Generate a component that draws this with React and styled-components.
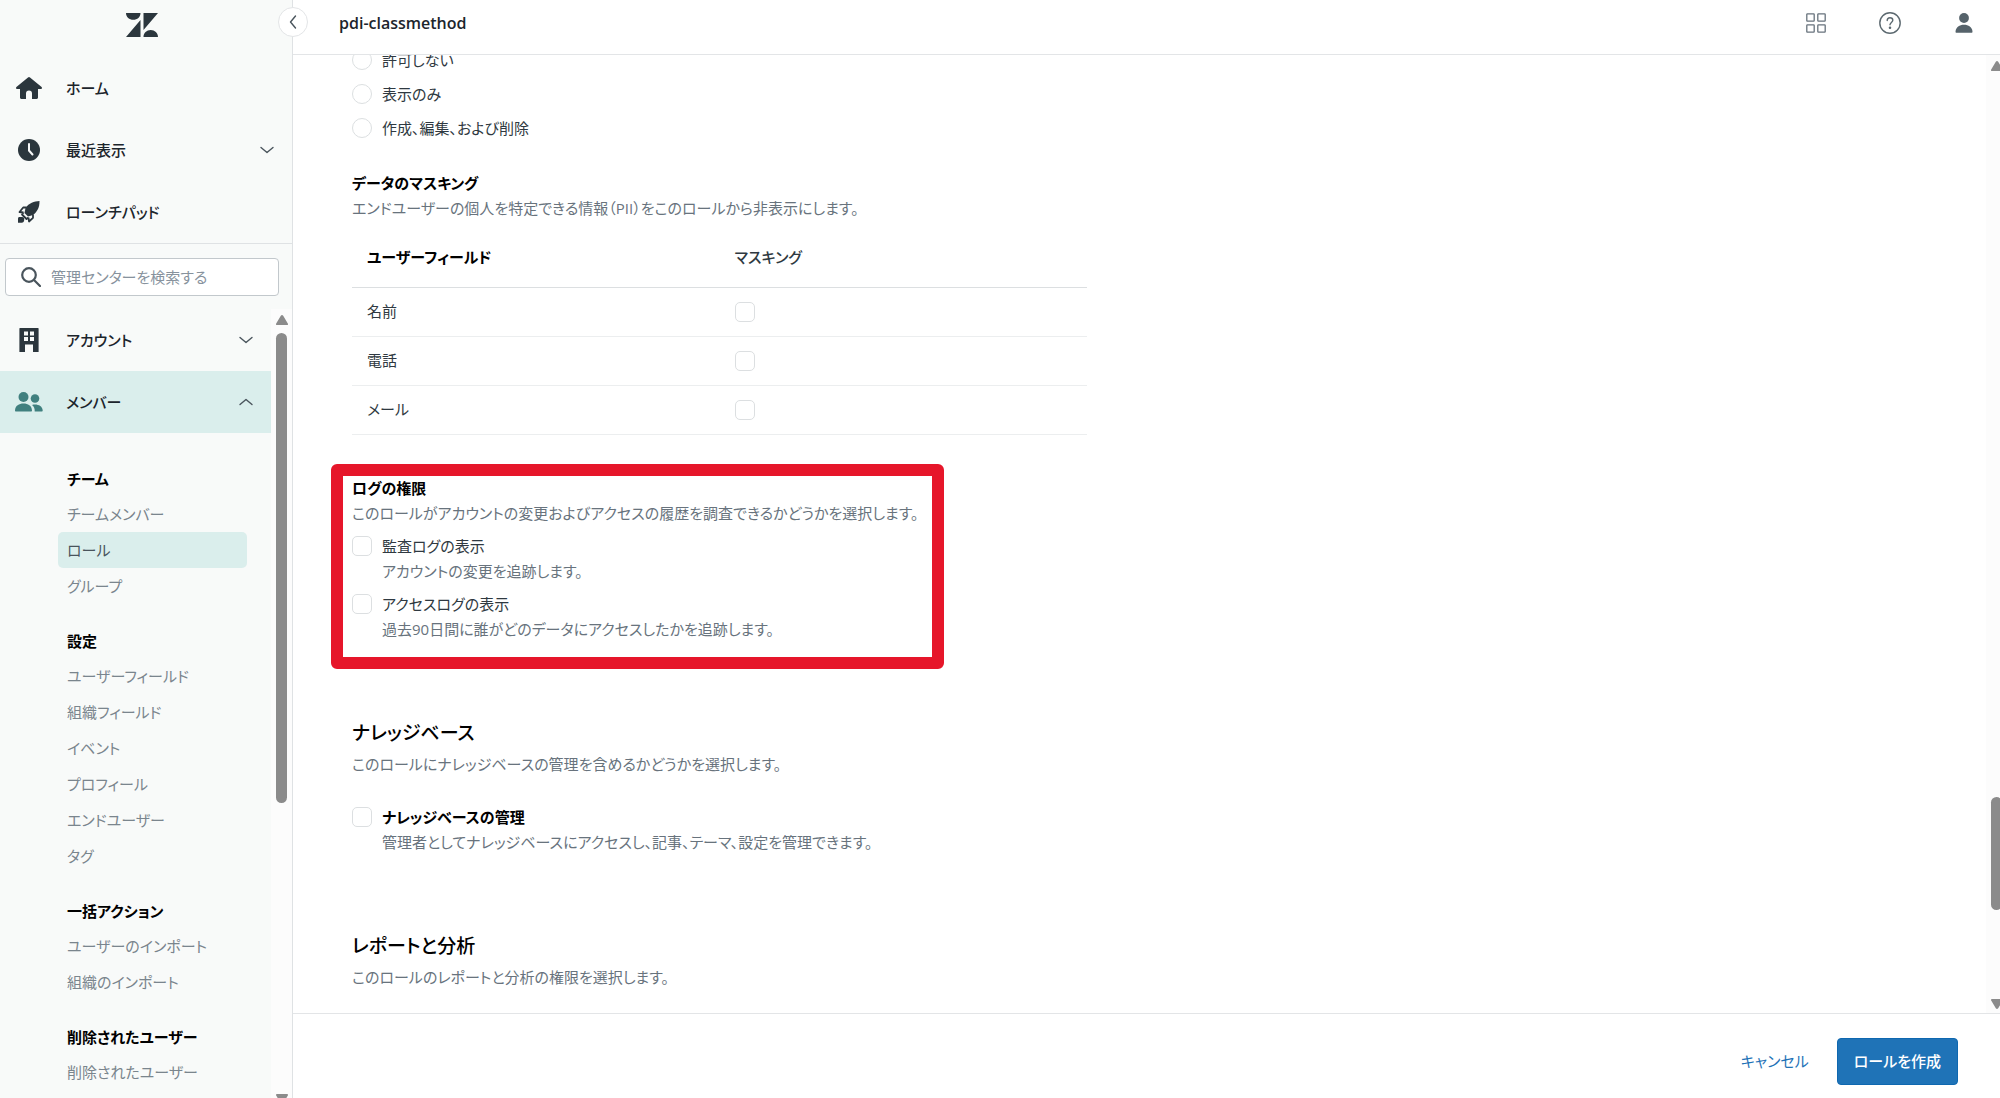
import styled, { createGlobalStyle } from 'styled-components';

const GlobalStyle = createGlobalStyle`
    * {
        box-sizing: border-box;
    }

    body {
        margin: 0;
        background: #fff;
        color: #2f3941;
        font-family: 'Open Sans', 'Noto Sans CJK JP', sans-serif;
        font-feature-settings: 'palt';
        font-size: 15px;
        line-height: 25px;
    }

    button, input {
        font: inherit;
        font-feature-settings: inherit;
        color: inherit;
    }
`;

const navGroups = [
    { title: 'チーム', links: ['チームメンバー', 'ロール', 'グループ'] },
    { title: '設定', links: ['ユーザーフィールド', '組織フィールド', 'イベント', 'プロフィール', 'エンドユーザー', 'タグ'] },
    { title: '一括アクション', links: ['ユーザーのインポート', '組織のインポート'] },
    { title: '削除されたユーザー', links: ['削除されたユーザー'] },
];

const accessOptions = ['許可しない', '表示のみ', '作成、編集、および削除'];

const maskFields = ['名前', '電話', 'メール'];

const logOptions = [
    { id: 'audit', label: '監査ログの表示', hint: 'アカウントの変更を追跡します。' },
    { id: 'access', label: 'アクセスログの表示', hint: '過去90日間に誰がどのデータにアクセスしたかを追跡します。' },
];

/* icons */

const Logo = () => (
    <svg width="32" height="24" viewBox="0 0 32 24" fill="#2b363d" aria-hidden="true">
        <path d="M0 0H14.5C14.5 4 11.3 6.8 7.3 6.8S0 4 0 0ZM14.5 7V24H0ZM17.5 0H32L17.5 17ZM17.5 24C17.5 20 20.7 17 24.7 17S32 20 32 24Z" />
    </svg>
);

const HomeIcon = () => (
    <svg width="26" height="22" viewBox="0 0 26 22" fill="currentColor" aria-hidden="true">
        <path d="M12 .4a1.6 1.6 0 0 1 2 0l11.3 9.4c1.2 1 .6 2.200-.6 2.200H22v8.600c0 .8-.5 1.400-1.300 1.400H16v-5.500a3 3 0 0 0-6 0V22H5.300C4.500 22 4 21.400 4 20.600V12H1.300C.1 12-.5 10.800.7 9.800Z" />
    </svg>
);

const ClockIcon = () => (
    <svg width="22" height="22" viewBox="0 0 22 22" aria-hidden="true">
        <circle cx="11" cy="11" r="11" fill="currentColor" />
        <path d="M11 5v6.500l3.500 4" fill="none" stroke="#f8f9f9" strokeWidth="2" strokeLinecap="round" />
    </svg>
);

const RocketIcon = () => (
    <svg width="24" height="24" viewBox="0 0 24 24" fill="currentColor" aria-hidden="true">
        <path d="M22.500 1C17 1.400 12 3 8.500 8L7.500 13 11 16.500 16 15C20.500 11.500 22.600 7 22.500 1Z" />
        <path d="M9.500 7.500H6.200L2.500 12l4 .5M16 14.500v3.300L12 21.500 11.500 17.500M6.500 12.500l-1.500 2 4.500 4.500 2-1.500" fill="none" stroke="currentColor" strokeWidth="1.800" strokeLinejoin="round" />
        <path d="M2 17h3.200c1.200 0 2 .8 2 2V20c0 1.500-1 2.800-2.500 2.800H1V19c0-1 .3-2 1-2Z" />
    </svg>
);

const BuildingIcon = () => (
    <svg width="20" height="24" viewBox="0 0 20 24" fill="currentColor" aria-hidden="true">
        <path fillRule="evenodd" d="M1 0H19a.6.6 0 0 1 .6.6V24H14V16.500H6V24H.4V.6A.6.6 0 0 1 1 0ZM5 3.500V7.500H9V3.500ZM11 3.500V7.500H15V3.500ZM5 9V13H9V9ZM11 9V13H15V9Z" />
    </svg>
);

const PeopleIcon = () => (
    <svg width="28" height="20" viewBox="0 0 28 20" fill="#40807f" aria-hidden="true">
        <circle cx="8.500" cy="5" r="5" />
        <circle cx="20" cy="6.500" r="4.300" />
        <path d="M0 18.500C.3 13.500 4 11.500 8.500 11.500S16.700 13.500 17 18.500c0 .6-.4 1-1 1H1c-.6 0-1-.4-1-1ZM17 13c1-.4 2-.5 3-.5 4 0 7.500 2 7.700 6 0 .6-.4 1-1 1h-7c.2-2.700-.7-5-2.700-6.500Z" />
    </svg>
);

const SearchIcon = () => (
    <svg width="20" height="20" viewBox="0 0 20 20" fill="none" stroke="#49545c" strokeWidth="2.200" strokeLinecap="round" aria-hidden="true">
        <circle cx="8" cy="8" r="6.800" />
        <path d="M13 13l6 6" />
    </svg>
);

const Chevron = ({ points }) => (
    <svg width="14" height="14" viewBox="0 0 14 14" fill="none" stroke="#49545c" strokeWidth="1.400" strokeLinecap="round" strokeLinejoin="round" aria-hidden="true">
        <polyline points={points} />
    </svg>
);

const DOWN = '1,4.500 7,9.500 13,4.500';
const UP = '1,9.500 7,4.500 13,9.500';
const LEFT = '9.500,1 4.500,7 9.500,13';

const GridIcon = () => (
    <svg width="20" height="20" viewBox="0 0 20 20" fill="none" stroke="#68737d" strokeWidth="1.300" aria-hidden="true">
        <rect x=".8" y=".8" width="7.400" height="7.400" rx=".6" />
        <rect x="11.800" y=".8" width="7.400" height="7.400" rx=".6" />
        <rect x=".8" y="11.800" width="7.400" height="7.400" rx=".6" />
        <rect x="11.800" y="11.800" width="7.400" height="7.400" rx=".6" />
    </svg>
);

const HelpIcon = () => (
    <svg width="22" height="22" viewBox="0 0 22 22" fill="none" stroke="#5c6970" strokeWidth="1.400" strokeLinecap="round" aria-hidden="true">
        <circle cx="11" cy="11" r="10.200" />
        <path d="M8.200 8.500C8.200 6.600 9.400 5.700 11 5.700s2.800 1 2.800 2.600c0 2-2.800 2.400-2.800 4.500" />
        <circle cx="11" cy="15.700" r=".6" fill="#5c6970" />
    </svg>
);

const UserIcon = () => (
    <svg width="18" height="20" viewBox="0 0 18 20" fill="#56636b" aria-hidden="true">
        <circle cx="9" cy="5" r="4.900" />
        <path d="M.5 18.700C.8 14 4.500 11.700 9 11.700s8.200 2.300 8.500 7c0 .6-.4 1-1 1h-15c-.6 0-1-.4-1-1Z" />
    </svg>
);

const ArrowIcon = ({ down }) => (
    <svg width="12" height="10" viewBox="0 0 12 10" fill="#8b8b8b" aria-hidden="true">
        <path d={down ? 'M1 0H11C12 0 12.300.8 11.800 1.600L7.200 9.200C6.500 10.200 5.500 10.200 4.800 9.200L.2 1.600C-.3.800 0 0 1 0Z' : 'M1 10H11C12 10 12.300 9.200 11.800 8.400L7.200.8C6.500-.2 5.500-.2 4.800.8L.2 8.400C-.3 9.200 0 10 1 10Z'} />
    </svg>
);

export default function App() {
    return (
        <>
            <GlobalStyle />
            <Page>
                <Sidebar>
                    <LogoBar><Logo /></LogoBar>
                    <NavButton><NavIcon><HomeIcon /></NavIcon>ホーム</NavButton>
                    <NavButton>
                        <NavIcon><ClockIcon /></NavIcon>最近表示
                        <NavChevron><Chevron points={DOWN} /></NavChevron>
                    </NavButton>
                    <NavButton><NavIcon><RocketIcon /></NavIcon>ローンチパッド</NavButton>
                    <SearchArea>
                        <SearchBox>
                            <SearchIcon />
                            <input type="text" placeholder="管理センターを検索する" aria-label="管理センターを検索する" />
                        </SearchBox>
                    </SearchArea>
                    <NavScroll>
                        <NavList>
                            <NavButton>
                                <NavIcon><BuildingIcon /></NavIcon>アカウント
                                <NavChevron><Chevron points={DOWN} /></NavChevron>
                            </NavButton>
                            <NavButton $active>
                                <NavIcon><PeopleIcon /></NavIcon>メンバー
                                <NavChevron><Chevron points={UP} /></NavChevron>
                            </NavButton>
                            <Groups>
                                {navGroups.map((group) => (
                                    <div key={group.title}>
                                        <GroupTitle>{group.title}</GroupTitle>
                                        {group.links.map((link) => (
                                            <GroupLink key={link} href="#" $active={link === 'ロール'}>{link}</GroupLink>
                                        ))}
                                    </div>
                                ))}
                            </Groups>
                        </NavList>
                        <Track $width={21}>
                            <ArrowIcon />
                            <Thumb $before={8} $height={470} />
                            <ArrowIcon down />
                        </Track>
                    </NavScroll>
                </Sidebar>

                <Main>
                    <Header>
                        <CollapseButton aria-label="サイドバーを閉じる"><Chevron points={LEFT} /></CollapseButton>
                        <Title>pdi-classmethod</Title>
                        <HeaderButton aria-label="製品"><GridIcon /></HeaderButton>
                        <HeaderButton aria-label="ヘルプ"><HelpIcon /></HeaderButton>
                        <HeaderButton aria-label="プロフィール"><UserIcon /></HeaderButton>
                    </Header>

                    <Body>
                        <Content>
                            {accessOptions.map((option) => (
                                <RadioRow key={option}>
                                    <Radio type="radio" name="access" />
                                    {option}
                                </RadioRow>
                            ))}

                            <Section $gap={26}>
                                <SubHeading>データのマスキング</SubHeading>
                                <Description>エンドユーザーの個人を特定できる情報（PII）をこのロールから非表示にします。</Description>
                                <Table>
                                    <thead>
                                        <tr>
                                            <th>ユーザーフィールド</th>
                                            <th>マスキング</th>
                                        </tr>
                                    </thead>
                                    <tbody>
                                        {maskFields.map((field) => (
                                            <tr key={field}>
                                                <td>{field}</td>
                                                <td><Checkbox type="checkbox" aria-label={field} /></td>
                                            </tr>
                                        ))}
                                    </tbody>
                                </Table>
                            </Section>

                            <Section $gap={41}>
                                <Highlight />
                                <SubHeading>ログの権限</SubHeading>
                                <Description>このロールがアカウントの変更およびアクセスの履歴を調査できるかどうかを選択します。</Description>
                                {logOptions.map(({ id, label, hint }) => (
                                    <Field key={id} $gap={8}>
                                        <Checkbox type="checkbox" id={id} />
                                        <label htmlFor={id}>{label}</label>
                                        <Hint>{hint}</Hint>
                                    </Field>
                                ))}
                            </Section>

                            <Section $gap={76}>
                                <Heading>ナレッジベース</Heading>
                                <Description>このロールにナレッジベースの管理を含めるかどうかを選択します。</Description>
                                <Field $gap={28} $strong>
                                    <Checkbox type="checkbox" id="knowledge" />
                                    <label htmlFor="knowledge">ナレッジベースの管理</label>
                                    <Hint>管理者としてナレッジベースにアクセスし、記事、テーマ、設定を管理できます。</Hint>
                                </Field>
                            </Section>

                            <Section $gap={76}>
                                <Heading>レポートと分析</Heading>
                                <Description>このロールのレポートと分析の権限を選択します。</Description>
                            </Section>
                        </Content>
                        <Track $width={14}>
                            <ArrowIcon />
                            <Thumb $before={726} $height={113} />
                            <ArrowIcon down />
                        </Track>
                    </Body>

                    <Footer>
                        <CancelButton>キャンセル</CancelButton>
                        <SubmitButton>ロールを作成</SubmitButton>
                    </Footer>
                </Main>
            </Page>
        </>
    );
}

const Page = styled.div`
    display: flex;
    height: 100vh;
    overflow: hidden;
`;

/* sidebar */

const Sidebar = styled.nav`
    display: flex;
    flex-direction: column;
    flex: none;
    width: 293px;
    background: #f8faf9;
    border-right: 1px solid #dfe2e4;
`;

const LogoBar = styled.div`
    display: flex;
    align-items: center;
    justify-content: center;
    flex: none;
    height: 57px;
    padding: 0 8px 8px 0;
`;

const NavButton = styled.button`
    display: flex;
    align-items: center;
    flex: none;
    width: 100%;
    height: 62px;
    padding: 0 18px 0 13px;
    border: 0;
    background: ${({ $active }) => ($active ? '#daeeec' : 'transparent')};
    color: #1c252c;
    font-weight: 500;
    text-align: left;
`;

const NavIcon = styled.span`
    display: flex;
    justify-content: center;
    width: 32px;
    margin-right: 21px;
    color: #2b363d;
`;

const NavChevron = styled.span`
    display: flex;
    margin-left: auto;
`;

const SearchArea = styled.div`
    flex: none;
    padding: 14px 13px 13px 5px;
    border-top: 1px solid #dfe2e4;
`;

const SearchBox = styled.label`
    display: flex;
    align-items: center;
    gap: 10px;
    height: 38px;
    padding: 0 15px;
    background: #fff;
    border: 1px solid #c2c8cc;
    border-radius: 4px;

    input {
        flex: 1;
        min-width: 0;
        padding: 0;
        border: 0;
        outline: 0;
        background: transparent;
    }

    input::placeholder {
        color: #87929d;
        opacity: 1;
    }
`;

/* runs a little past the window, so the lower scroll arrow is cut */
const NavScroll = styled.div`
    display: flex;
    flex: 1;
    min-height: 0;
    margin-bottom: -10px;
`;

const NavList = styled.div`
    flex: 1;
    overflow: hidden;
`;

const Groups = styled.div`
    display: flex;
    flex-direction: column;
    gap: 20px;
    padding: 29px 24px 0 58px;
`;

const GroupTitle = styled.h2`
    margin: 0;
    padding-left: 9px;
    color: #000;
    font-size: 15px;
    font-weight: 600;
    line-height: 34px;
`;

const GroupLink = styled.a`
    display: block;
    padding-left: 9px;
    border-radius: 5px;
    background: ${({ $active }) => ($active ? '#daeeec' : 'transparent')};
    color: ${({ $active }) => ($active ? '#49545c' : '#7a858d')};
    line-height: 36px;
    text-decoration: none;
`;

/* scrollbars */

const Track = styled.div`
    display: flex;
    flex-direction: column;
    flex: none;
    width: ${({ $width }) => $width}px;
    padding: 6px 0 4px 5px;
    background: #fcfcfc;

    svg {
        flex: none;
    }
`;

const Thumb = styled.div`
    flex: none;
    width: 11px;
    height: ${({ $height }) => $height}px;
    margin: ${({ $before }) => $before}px 0 auto;
    border-radius: 6px;
    background: #8b8b8b;
`;

/* main column */

const Main = styled.main`
    display: flex;
    flex-direction: column;
    flex: 1;
    min-width: 0;
`;

const Header = styled.header`
    position: relative;
    display: flex;
    align-items: center;
    flex: none;
    height: 55px;
    padding: 0 20px 8px 46px;
    border-bottom: 1px solid #e3e5e7;
`;

const CollapseButton = styled.button`
    position: absolute;
    top: 7px;
    left: -15px;
    display: flex;
    align-items: center;
    justify-content: center;
    width: 30px;
    height: 30px;
    padding: 0;
    border: 1px solid #e3e5e7;
    border-radius: 50%;
    background: #fff;
`;

const Title = styled.h1`
    flex: 1;
    margin: 0;
    color: #1c252c;
    font-size: 16px;
    font-weight: 600;
`;

const HeaderButton = styled.button`
    display: flex;
    align-items: center;
    justify-content: center;
    width: 32px;
    height: 32px;
    margin-left: 42px;
    padding: 0;
    border: 0;
    background: transparent;
`;

const Body = styled.div`
    display: flex;
    flex: 1;
    min-height: 0;
    overflow: hidden;
`;

const Content = styled.div`
    flex: 1;
    min-width: 0;
    margin-top: -12px;
    padding: 0 60px 0 59px;
`;

const Checkbox = styled.input`
    appearance: none;
    flex: none;
    display: block;
    width: 20px;
    height: 20px;
    margin: 0;
    border: 1px solid #dcdfe1;
    border-radius: 5px;
    background: #fff;
`;

const Radio = styled(Checkbox)`
    border-radius: 50%;
`;

const RadioRow = styled.label`
    display: flex;
    align-items: center;
    gap: 10px;
    height: 34px;
`;

const Section = styled.section`
    position: relative;
    max-width: 735px;
    margin-top: ${({ $gap }) => $gap}px;
`;

const SubHeading = styled.h3`
    margin: 0;
    color: #000;
    font-size: 15px;
    font-weight: 600;
`;

const Heading = styled.h2`
    margin: 0 0 4px;
    color: #000;
    font-size: 19px;
    font-weight: 500;
    line-height: 30px;
`;

const Description = styled.p`
    margin: 0;
    color: #68737d;
`;

const Table = styled.table`
    width: 100%;
    margin-top: 8px;
    border-collapse: collapse;
    table-layout: fixed;

    th, td {
        padding: 0 15px;
        text-align: left;
    }

    th {
        height: 58px;
        border-bottom: 1px solid #dcdfe1;
        font-weight: 500;
    }

    th:first-child {
        color: #000;
        font-weight: 600;
    }

    td {
        height: 49px;
        border-bottom: 1px solid #eceeef;
    }
`;

const Field = styled.div`
    display: grid;
    grid-template-columns: 20px 1fr;
    column-gap: 10px;
    align-items: center;
    margin-top: ${({ $gap }) => $gap}px;

    label {
        justify-self: start;
        color: ${({ $strong }) => ($strong ? '#000' : 'inherit')};
        font-weight: ${({ $strong }) => ($strong ? 600 : 400)};
    }
`;

const Hint = styled.p`
    grid-column: 2;
    margin: 0;
    color: #68737d;
`;

/* hand-marked frame round the log permissions */
const Highlight = styled.div`
    position: absolute;
    inset: -12px 143px -27px -21px;
    border: 12px solid #e6162a;
    border-radius: 6px;
    pointer-events: none;
`;

const Footer = styled.footer`
    display: flex;
    align-items: center;
    justify-content: flex-end;
    flex: none;
    gap: 28px;
    height: 85px;
    padding: 10px 42px 0 0;
    border-top: 1px solid #e3e5e7;
`;

const CancelButton = styled.button`
    padding: 0;
    border: 0;
    background: transparent;
    color: #1f73b7;
`;

const SubmitButton = styled.button`
    height: 47px;
    padding: 0 16px;
    border: 1px solid #0f68b0;
    border-radius: 4px;
    background: #1f73b7;
    color: #fff;
    font-weight: 500;
`;
